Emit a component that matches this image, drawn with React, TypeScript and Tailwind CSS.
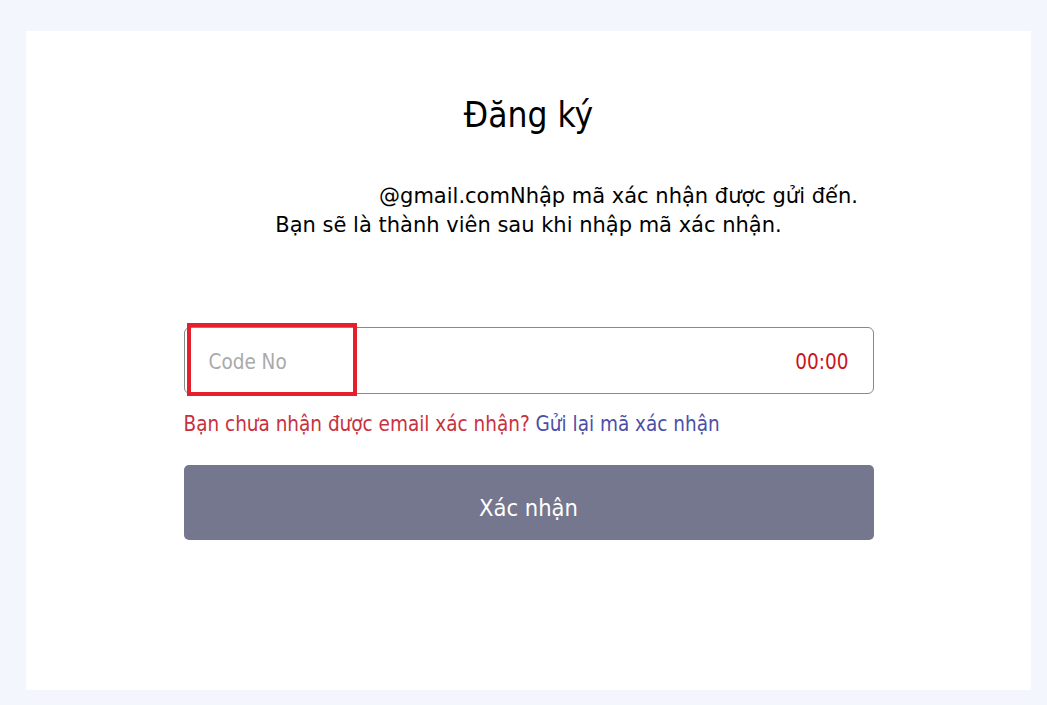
export default function App() {
  return (
    <div
      className="min-h-[705px] bg-[#f3f6fd] pt-[31px] pr-4 pb-[15px] pl-[26px] text-black"
      style={{ fontFamily: '"DejaVu Sans Condensed", "DejaVu Sans", sans-serif' }}
    >
      <div className="flex h-[659px] w-[1005px] flex-col items-center bg-white">
        <h1 className="mt-[62px] text-[35px] leading-[44px]">Đăng ký</h1>

        <div
          className="mt-[45px] text-center text-[21px] leading-[29px]"
          style={{ fontFamily: '"DejaVu Sans", sans-serif' }}
        >
          <p>
            <span className="inline-block w-[180px]" />
            @gmail.comNhập mã xác nhận được gửi đến.
          </p>
          <p>Bạn sẽ là thành viên sau khi nhập mã xác nhận.</p>
        </div>

        <div className="mt-[87px] w-[690px]">
          <div className="relative flex h-[67px] items-center justify-between rounded-[6px] border border-[#888] px-6 pt-1">
            <input
              placeholder="Code No"
              className="w-40 bg-transparent text-[20.5px] outline-none placeholder:text-[#aaa]"
            />
            <span className="text-[20.5px] text-[#c8151b]">00:00</span>
            <div className="absolute top-[-5px] left-[2px] h-[73px] w-[170px] border-4 border-[#e3202b]" />
          </div>

          <p className="mt-[17px] text-[20.5px] leading-[26px] text-[#c8313f]">
            Bạn chưa nhận được email xác nhận?{' '}
            <a className="text-[#4a50a8]">Gửi lại mã xác nhận</a>
          </p>

          <button className="mt-[28px] flex h-[75px] w-full items-center justify-center rounded-[5px] bg-[#75778e] pt-3 text-[23.5px] text-white">
            Xác nhận
          </button>
        </div>
      </div>
    </div>
  );
}
